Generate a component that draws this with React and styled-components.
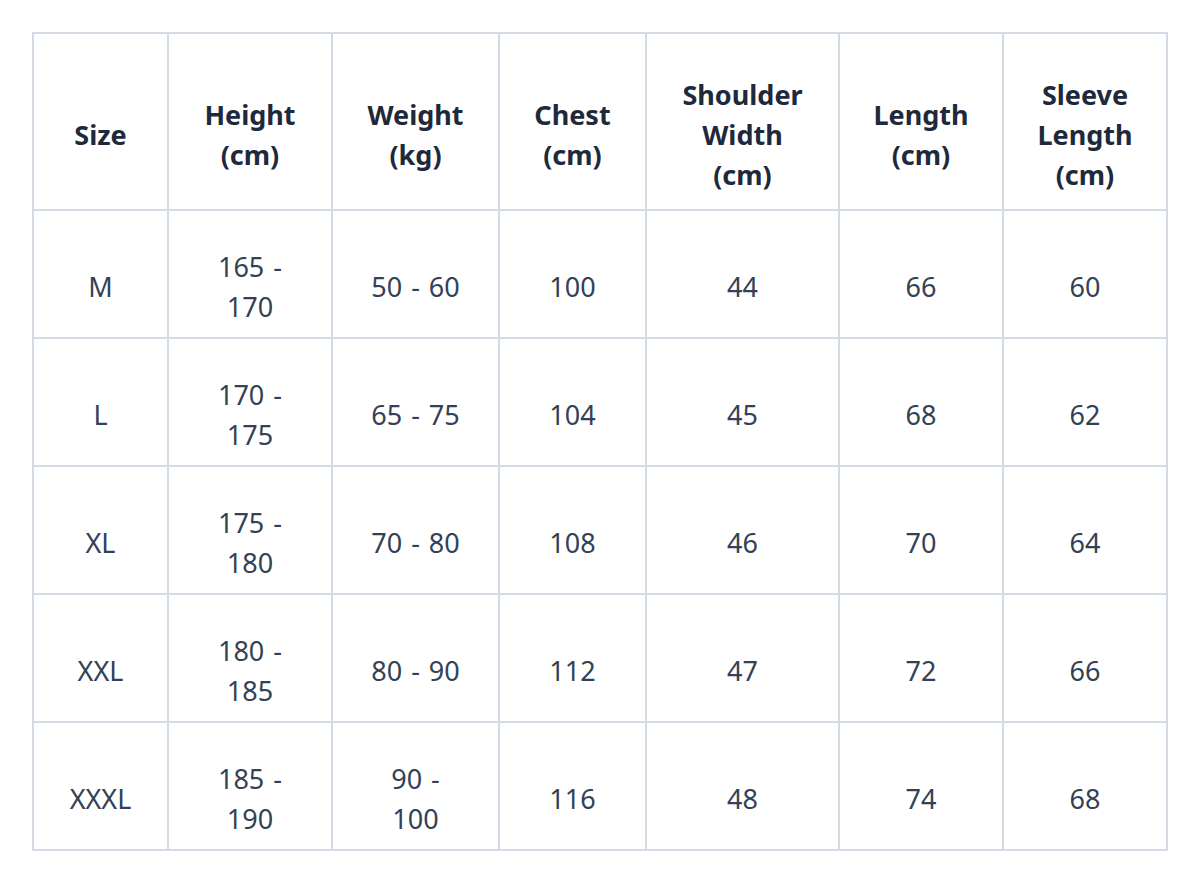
import styled, { createGlobalStyle } from "styled-components"

const GlobalStyle = createGlobalStyle`
  html, body {
    margin: 0;
    padding: 0;
    background: #fff;
  }
  body {
    font-family: "Noto Sans", "Open Sans", sans-serif;
  }
`

const Page = styled.div`
  padding: 32px 34px 32px 32px;
`

const Table = styled.table`
  width: 100%;
  table-layout: fixed;
  border-collapse: separate;
  border-spacing: 0;
  border: 1px solid #d3dbe6;
  font-size: 27px;
  line-height: 40px;
`

const Head = styled.th`
  border: 1px solid #d3dbe6;
  padding: 41px 12px 14px;
  text-align: center;
  vertical-align: middle;
  font-weight: 700;
  color: #1e293b;
`

const Cell = styled.td`
  border: 1px solid #d3dbe6;
  padding: 36px 12px 10px;
  text-align: center;
  vertical-align: middle;
  color: #334155;
  word-spacing: 2px;
`

const widths = [135, 164, 167, 147, 193, 164, 164]

const headers = [
  ["Size"],
  ["Height", "(cm)"],
  ["Weight", "(kg)"],
  ["Chest", "(cm)"],
  ["Shoulder", "Width", "(cm)"],
  ["Length", "(cm)"],
  ["Sleeve", "Length", "(cm)"],
]

const rows = [
  [["M"], ["165 -", "170"], ["50 - 60"], ["100"], ["44"], ["66"], ["60"]],
  [["L"], ["170 -", "175"], ["65 - 75"], ["104"], ["45"], ["68"], ["62"]],
  [["XL"], ["175 -", "180"], ["70 - 80"], ["108"], ["46"], ["70"], ["64"]],
  [["XXL"], ["180 -", "185"], ["80 - 90"], ["112"], ["47"], ["72"], ["66"]],
  [["XXXL"], ["185 -", "190"], ["90 -", "100"], ["116"], ["48"], ["74"], ["68"]],
]

function Lines({ parts }) {
  return parts.map((p, i) => (
    <span key={i}>
      {i > 0 && <br />}
      {p}
    </span>
  ))
}

export default function App() {
  return (
    <Page>
      <GlobalStyle />
      <Table>
        <colgroup>
          {widths.map((w, i) => (
            <col key={i} style={{ width: `${w}px` }} />
          ))}
        </colgroup>
        <thead>
          <tr>
            {headers.map((h, i) => (
              <Head key={i}>
                <Lines parts={h} />
              </Head>
            ))}
          </tr>
        </thead>
        <tbody>
          {rows.map((row, r) => (
            <tr key={r}>
              {row.map((c, i) => (
                <Cell key={i}>
                  <Lines parts={c} />
                </Cell>
              ))}
            </tr>
          ))}
        </tbody>
      </Table>
    </Page>
  )
}
